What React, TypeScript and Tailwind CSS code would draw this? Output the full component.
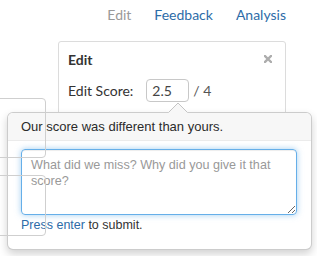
import React from "react";

// popover-style feedback box over the score editor
export default function App() {
  const [note, setNote] = React.useState("");

  return (
    <div className="relative w-[317px] h-[256px] overflow-hidden bg-white">
      {/* top nav */}
      <nav className="flex justify-end gap-[23px] pr-[31px] pt-[5px] text-[14px] leading-[20px] font-['Lato',sans-serif]">
        <span className="text-[#999]">Edit</span>
        <a className="text-[#2d6ca8]">Feedback</a>
        <a className="text-[#2d6ca8]">Analysis</a>
      </nav>

      {/* edit panel */}
      <div className="ml-[58px] mt-[16px] w-[228px] h-[120px] border border-[#dcdcdc] rounded-t-[3px] pl-[9px] pr-[13px] pt-[8px] font-['Lato',sans-serif] text-[#333]">
        <div className="flex items-center justify-between">
          <h4 className="text-[14px] leading-[20px] font-bold">Edit</h4>
          <svg width="8" height="8" viewBox="0 0 8 8" className="mt-[-3px]">
            <path d="M1 1 L7 7 M7 1 L1 7" stroke="#adadad" strokeWidth="2.4" strokeLinecap="square" />
          </svg>
        </div>
        <div className="flex items-center mt-[9px] text-[14px] leading-[20px]">
          <span>Edit Score:</span>
          <div className="ml-[13px] w-[43px] h-[23px] border border-[#c8c8c8] rounded-[4px] pl-[5px] text-[#444] flex items-center">
            2.5
          </div>
          <span className="ml-[4px] text-[#555]">/ 4</span>
        </div>
      </div>

      {/* popover */}
      <div className="absolute left-[7px] top-[112px] w-[305px] h-[138px] bg-white border border-[rgba(0,0,0,0.2)] rounded-[6px] shadow-[0_4px_8px_rgba(0,0,0,0.18)] font-['Liberation_Sans',Arial,sans-serif]">
        <svg width="20" height="11" viewBox="0 0 20 11" className="absolute left-[160px] top-[-11px]">
          <path d="M0 11 L10 1 L20 11 Z" fill="#f7f7f7" />
          <path d="M0.5 10.5 L10 1 L19.5 10.5" fill="none" stroke="#c4c4c4" strokeWidth="1" />
        </svg>
        <div className="bg-[#f7f7f7] border-b border-[#ebebeb] rounded-t-[5px] px-[13px] pt-[5px] pb-[4px] text-[13px] leading-[18px] text-[#2b2b2b]">
          Our score was different than yours.
        </div>
        <div className="pl-[13px] pr-[14px] pt-[8px]">
          <textarea
            value={note}
            onChange={(e) => setNote(e.target.value)}
            placeholder="What did we miss? Why did you give it that score?"
            className="block w-full h-[66px] border border-[#66afe9] rounded-[4px] px-[9px] pt-[7px] pb-[5px] text-[12.6px] leading-[16px] text-[#555] placeholder:text-[#999] outline-none shadow-[inset_0_1px_1px_rgba(0,0,0,0.075),0_0_6px_rgba(102,175,233,0.6)] font-['Liberation_Sans',Arial,sans-serif]"
          />
          <p className="mt-[1px] text-[12.5px] leading-[18px] text-[#333]">
            <a className="text-[#2d6ca8]">Press enter</a> to submit.
          </p>
        </div>
      </div>

      <div className="absolute left-[-20px] top-[98px] w-[66px] h-[60px] border border-[#cfcfcf] rounded-[4px]" />
      <div className="absolute left-[-20px] top-[175px] w-[66px] h-[61px] border border-[#cfcfcf] rounded-[4px]" />
    </div>
  );
}
